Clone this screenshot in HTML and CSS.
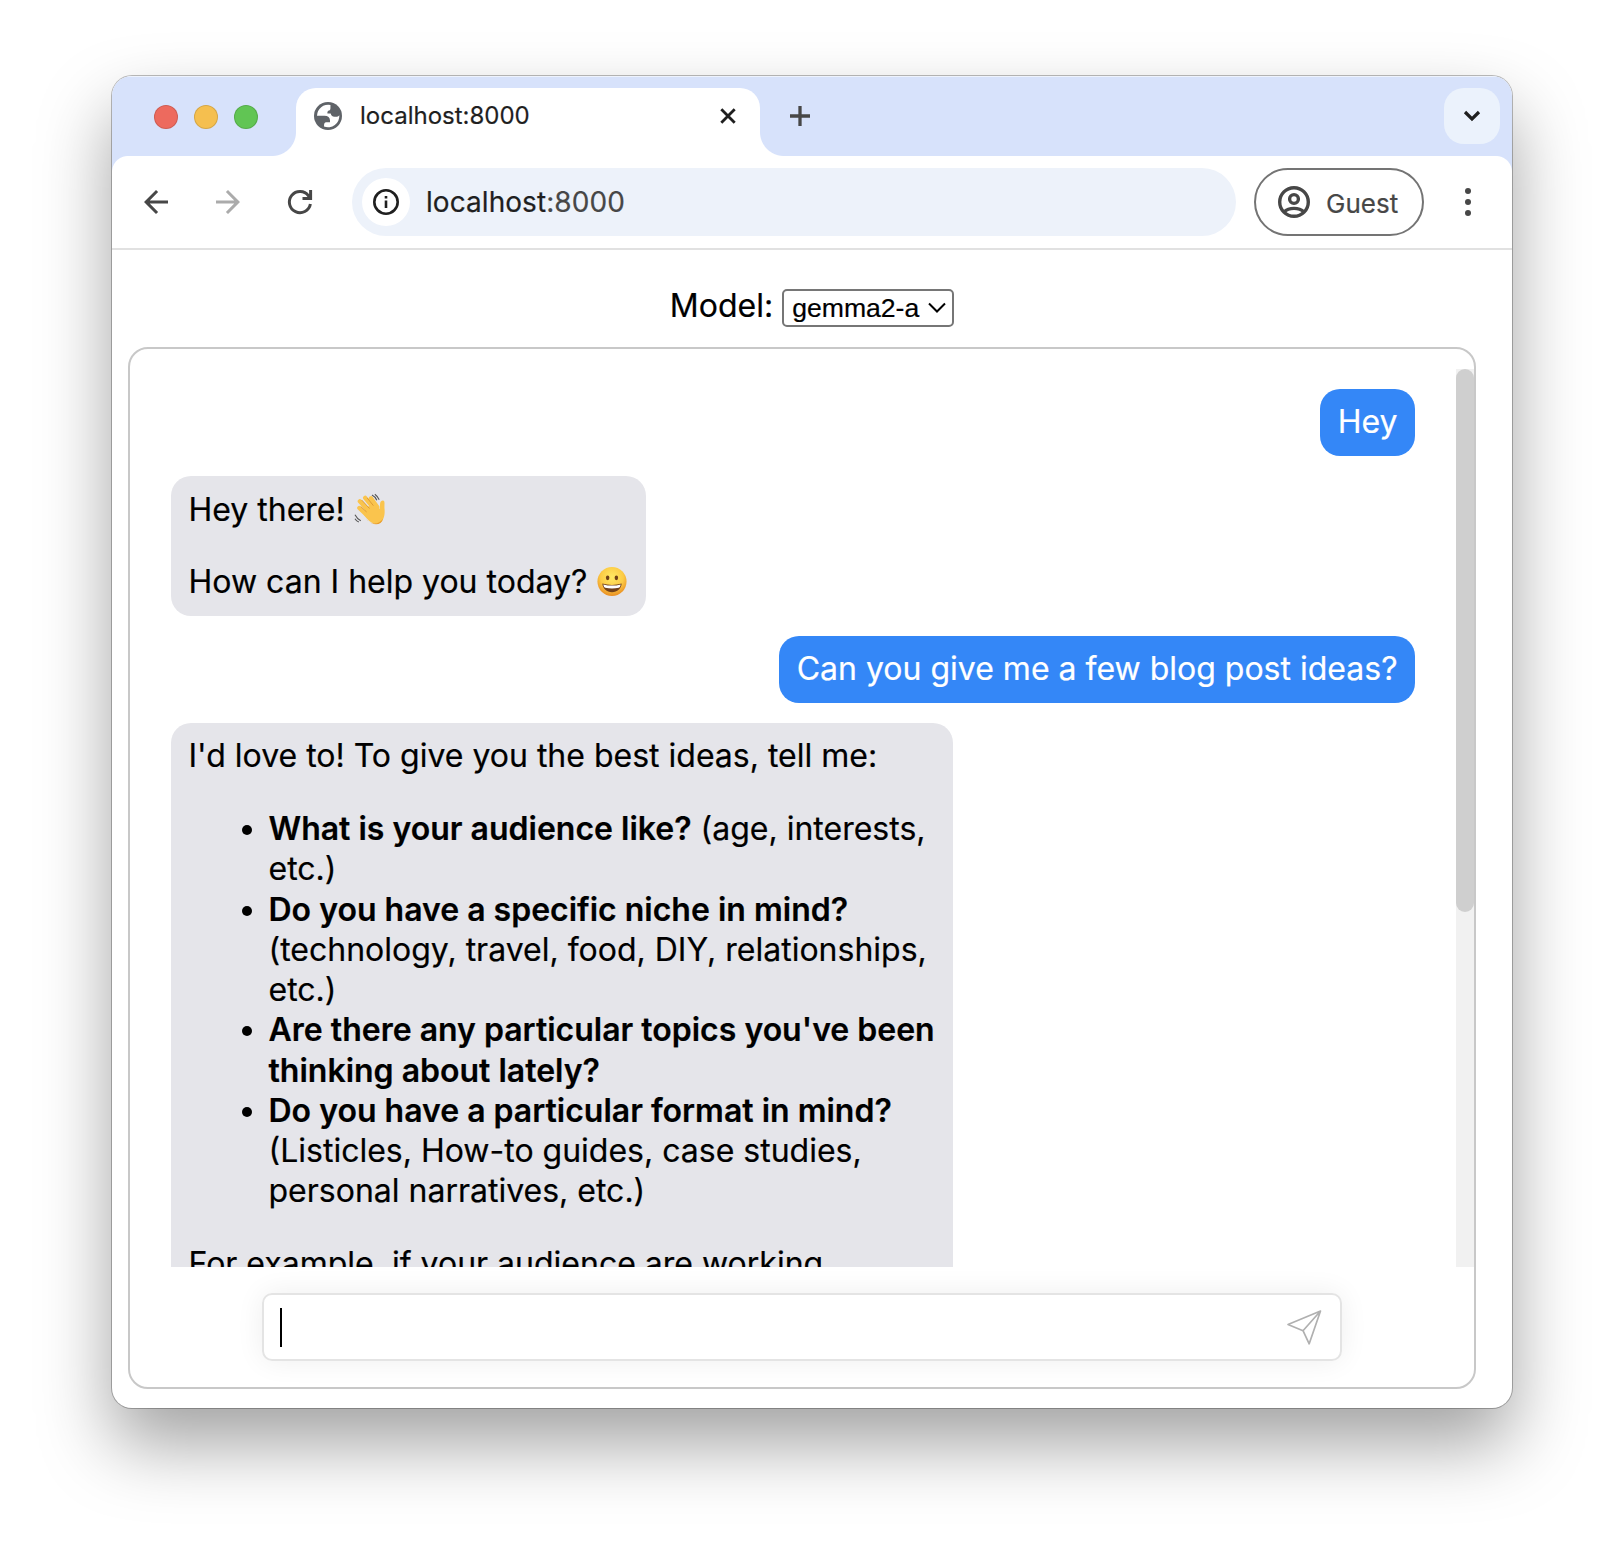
FILE: index.html
```html
<!DOCTYPE html>
<html lang="en">
<head>
<meta charset="utf-8">
<title>localhost:8000</title>
<link rel="stylesheet" href="styles.css">
</head>
<body>
<div class="window">
  <div class="tabstrip">
    <div class="lights"><span class="light red"></span><span class="light yellow"></span><span class="light green"></span></div>
    <div class="tab">
      <svg class="globe" width="28" height="28" viewBox="0 0 28 28"><circle cx="14" cy="14" r="14" fill="#5f6368"/><path d="M16.500 2.900A11.300 11.300 0 0 0 3 13.800H10.500C14 13.800 16 15.500 16 18.500V20.200H12.200C10.500 20.200 10 21.300 10 24.600A11.300 11.300 0 0 0 25.300 13.200C24.300 14.600 22.500 15 20.500 14.700C18.200 14.400 17 13.200 16.700 11.400H13.500C13 10 14 8.300 15.800 8.300C16.800 7 16.300 5 16.500 2.900Z" fill="#fff"/></svg>
      <span class="tab-title">localhost:8000</span>
      <svg class="close" width="16" height="16" viewBox="0 0 16 16"><path d="M1.300 1.300L14.700 14.700M14.700 1.300L1.300 14.700" stroke="#1f1f1f" stroke-width="2.800"/></svg>
    </div>
    <svg class="plus" width="20" height="20" viewBox="0 0 20 20"><path d="M10 0V20M0 10H20" stroke="#474747" stroke-width="3.300"/></svg>
    <div class="tab-search"><svg width="18" height="12" viewBox="0 0 18 12"><path d="M2 2L9 9L16 2" fill="none" stroke="#1f1f1f" stroke-width="3.200"/></svg></div>
  </div>
  <div class="toolbar">
    <svg width="36" height="36" viewBox="0 0 24 24" fill="#474747"><path d="M20 11H7.830l5.590-5.590L12 4l-8 8 8 8 1.410-1.410L7.830 13H20v-2z"/></svg>
    <svg width="36" height="36" viewBox="0 0 24 24" fill="#ababab"><path d="M12 4l-1.410 1.410L16.170 11H4v2h12.170l-5.580 5.590L12 20l8-8z"/></svg>
    <svg width="36" height="36" viewBox="0 0 36 36" fill="none" stroke="#474747" stroke-width="3"><path d="M28.400 20A10.600 10.600 0 1 1 26.500 11.800L28.500 14.500M28.600 6V14.500H20.500"/></svg>
    <div class="omnibox">
      <div class="info"><svg width="26" height="26" viewBox="0 0 26 26"><circle cx="13" cy="13" r="11.700" fill="none" stroke="#1f1f1f" stroke-width="2.600"/><path d="M13 11.500V19M13 7V9.600" stroke="#1f1f1f" stroke-width="2.600"/></svg></div>
      <span class="url">localhost<span class="port">:8000</span></span>
    </div>
    <div class="guest">
      <svg width="32" height="32" viewBox="0 0 32 32" fill="none" stroke="#474747" stroke-width="3.400"><circle cx="16" cy="16" r="14.300"/><circle cx="16" cy="13" r="4.400"/><path d="M6 26C11 21.200 21 21.200 26 26"/></svg>
      <span>Guest</span>
    </div>
    <svg class="menu" width="6" height="28" viewBox="0 0 6 28" fill="#474747"><circle cx="3" cy="3" r="3"/><circle cx="3" cy="14" r="3"/><circle cx="3" cy="25" r="3"/></svg>
  </div>
  <div class="page">
    <div class="model">
      <span>Model:</span>
      <div class="select"><span>gemma2-a</span><svg width="18" height="12" viewBox="0 0 18 12"><path d="M1 1.500L9 9.500L17 1.500" fill="none" stroke="#000" stroke-width="2"/></svg></div>
    </div>
    <div class="chat">
      <div class="scroller">
        <div class="messages">
          <div class="bubble user">Hey</div>
          <div class="bubble bot greeting">
            <p>Hey there! <svg class="emoji" width="32" height="33" viewBox="0 0 33 33"><g fill="none" stroke="#fac44d" stroke-linecap="round" stroke-width="4.400"><path d="M6 8L17 20M11.500 4.500L21 16M17.500 5L24 14M5.500 15L15 24"/></g><path d="M13 14L22 11L26.500 16C27.500 13 25.500 8 29.500 7.200C32.500 7 31 11 31.500 16C32 22 31 29 25 31C19 33 14 27 10 22Z" fill="#fac44d"/><path d="M12 26C17 32 25 33 30 26C28 33 20 34.500 12 26Z" fill="#e89c2c"/><path d="M8 6.800L16 15.500M13.500 4.500L20 12.500M7 13.500L13 19" fill="none" stroke="#dd9934" stroke-width="1"/><path d="M18.500 1.500Q22 3 23.500 7M21.500 .8Q24.500 3 26 6.500M1 22Q3 26 7 28M1 26Q2.500 28.500 5 29.500" fill="none" stroke="#555" stroke-width="1.100"/></svg></p>
            <p>How can I help you today? <svg class="emoji" width="32" height="33" viewBox="0 0 33 33"><defs><radialGradient id="face" cx=".5" cy=".35" r=".65"><stop offset="0" stop-color="#ffe964"/><stop offset=".6" stop-color="#fccb45"/><stop offset="1" stop-color="#e98d22"/></radialGradient></defs><circle cx="16.500" cy="16.500" r="15" fill="url(#face)"/><ellipse cx="12" cy="12.700" rx="1.800" ry="2.500" fill="#714016"/><ellipse cx="21" cy="12.700" rx="1.800" ry="2.500" fill="#714016"/><path d="M6.500 18.500Q16.500 21.500 26.500 18.500C26 24 22 27.500 16.500 27.500S7 24 6.500 18.500Z" fill="#71401a"/><path d="M7.500 19.500Q16.500 22 25.500 19.500Q25 22.500 23.500 23Q16.500 24.500 9.500 23Q8 22.500 7.500 19.500Z" fill="#fff"/></svg></p>
          </div>
          <div class="bubble user">Can you give me a few blog post ideas?</div>
          <div class="bubble bot long">
            <p>I'd love to! To give you the best ideas, tell me:</p>
            <ul>
              <li><strong>What is your audience like?</strong> (age, interests, etc.)</li>
              <li><strong>Do you have a specific niche in mind?</strong> (technology, travel, food, DIY, relationships, etc.)</li>
              <li><strong>Are there any particular topics you've been thinking about lately?</strong></li>
              <li><strong>Do you have a particular format in mind?</strong> (Listicles, How-to guides, case studies, personal narratives, etc.)</li>
            </ul>
            <p>For example, if your audience are working</p>
          </div>
        </div>
        <div class="track"><div class="thumb"></div></div>
      </div>
      <div class="composer">
        <span class="caret"></span>
        <svg width="36" height="36" viewBox="0 0 36 36" fill="none" stroke="#b0b0b0" stroke-width="1.700" stroke-linejoin="round"><path d="M34.500 2L2 15.500L17 21.700L23.200 34.800ZM34.500 2L17 21.700"/></svg>
      </div>
    </div>
  </div>
</div>
</body>
</html>
```
FILE: styles.css
```css
* { box-sizing: border-box; }
body {
  margin: 0;
  height: 1556px;
  padding: 76px 112px 148px;
  background: #fff;
  color: #000;
  font-family: Inter, "Liberation Sans", sans-serif;
  -webkit-text-stroke: .2px currentColor;
  overflow: hidden;
}
svg { display: block; flex: none; }
.window {
  height: 1332px;
  display: flex;
  flex-direction: column;
  border-radius: 20px;
  background: #fff;
  overflow: hidden;
  box-shadow: 0 0 0 1px rgba(0, 0, 0, .26), 0 36px 72px rgba(0, 0, 0, .37);
}
.tabstrip {
  height: 80px;
  flex: none;
  display: flex;
  align-items: flex-start;
  padding: 12px 12px 0 42px;
  background: #d7e2fb;
  box-shadow: inset 0 1px 0 #eef3fd;
}
.lights { display: flex; gap: 16px; padding-top: 17px; width: 142px; }
.light { width: 24px; height: 24px; border-radius: 50%; border: 1px solid rgba(0, 0, 0, .13); }
.red { background: #ed6a5e; }
.yellow { background: #f5bf4f; }
.green { background: #61c554; }
.tab {
  position: relative;
  width: 464px;
  height: 68px;
  padding: 0 24px 12px 18px;
  display: flex;
  align-items: center;
  background: #fff;
  border-radius: 20px 20px 0 0;
}
.tab::before, .tab::after {
  content: "";
  position: absolute;
  bottom: 0;
  width: 24px;
  height: 24px;
}
.tab::before { left: -24px; background: radial-gradient(circle at 0 0, transparent 23.500px, #fff 24.500px); }
.tab::after { right: -24px; background: radial-gradient(circle at 100% 0, transparent 23.500px, #fff 24.500px); }
.tab-title { margin-left: 18px; padding-bottom: 2px; font-size: 24px; color: #1f1f1f; flex: 1; }
.plus { margin: 18px 0 0 30px; }
.tab-search {
  margin-left: auto;
  width: 56px;
  height: 56px;
  border-radius: 20px;
  background: #ebf2fc;
  display: flex;
  align-items: center;
  justify-content: center;
}
.toolbar {
  height: 94px;
  flex: none;
  display: flex;
  align-items: center;
  padding: 0 41px 0 26px;
  gap: 36px;
  position: relative;
  background: #fff;
  border-bottom: 2px solid #e1e1e1;
}
.toolbar::before, .toolbar::after {
  content: "";
  position: absolute;
  top: 0;
  width: 16px;
  height: 16px;
}
.toolbar::before { left: 0; background: radial-gradient(circle at 100% 100%, transparent 15.500px, #d7e2fb 16.500px); }
.toolbar::after { right: 0; background: radial-gradient(circle at 0 100%, transparent 15.500px, #d7e2fb 16.500px); }
.omnibox {
  margin-left: -2px;
  width: 884px;
  height: 68px;
  border-radius: 34px;
  background: #edf2fa;
  display: flex;
  align-items: center;
  padding-left: 10px;
}
.info {
  width: 48px;
  height: 48px;
  border-radius: 50%;
  background: #fff;
  display: flex;
  align-items: center;
  justify-content: center;
}
.url { margin-left: 16px; font-size: 28px; letter-spacing: .06px; color: #1f1f1f; }
.port { color: #474747; }
.guest {
  margin-left: -18px;
  width: 170px;
  height: 68px;
  border: 2px solid #747474;
  border-radius: 34px;
  display: flex;
  align-items: center;
  gap: 16px;
  padding-left: 22px;
  font-size: 26px;
  color: #474747;
}
.guest span { padding-top: 2px; }
.menu { margin-left: auto; }
.page { flex: 1; padding: 0 36px 19px 16px; font-size: 32px; display: flex; flex-direction: column; min-height: 0; }
.model {
  height: 97px;
  margin-right: -20px;
  padding-top: 36px;
  display: flex;
  justify-content: center;
  align-items: flex-start;
  gap: 9px;
}
.select {
  margin-top: 3px;
  width: 172px;
  height: 38px;
  border: 2px solid #767676;
  border-radius: 5px;
  display: flex;
  align-items: center;
  gap: 9px;
  padding-left: 8px;
  font-family: "Liberation Sans", sans-serif;
  font-size: 26.600px;
}
.chat {
  height: 1042px;
  border: 2px solid #c8c8c8;
  border-radius: 20px;
  padding-top: 20px;
}
.scroller { height: 898px; display: flex; overflow: hidden; }
.messages {
  flex: 1;
  padding: 20px 41px 0;
  display: flex;
  flex-direction: column;
  align-items: flex-start;
  gap: 20px;
  line-height: 40.270px;
}
.bubble { padding: 13px 17.500px 13.600px; border-radius: 20px; flex: none; white-space: nowrap; }
.user { align-self: flex-end; background: #3487f7; color: #fff; }
.bot { background: #e5e5ea; }
.greeting { padding-top: 13.800px; }
.long { width: 782px; white-space: normal; }
.bubble p { margin: 0; }
.bubble p + p { margin-top: 32px; }
.bubble ul { margin: 33.100px 0 32.200px; padding-left: 80px; }
.bubble strong { font-weight: 600; }
.emoji { display: inline-block; vertical-align: -5px; }
.track { width: 18px; background: #f1f1f1; }
.thumb { height: 543px; border-radius: 9px; background: #cfcfcf; }
.composer {
  margin: 26px 132px 0;
  height: 68px;
  border: 2px solid #e4e4e4;
  border-radius: 10px;
  display: flex;
  align-items: center;
  justify-content: space-between;
  padding: 0 18px 0 16px;
  box-shadow: 0 0 28px rgba(0, 20, 20, .07);
}
.caret { width: 2px; height: 39px; background: #000; }
```
